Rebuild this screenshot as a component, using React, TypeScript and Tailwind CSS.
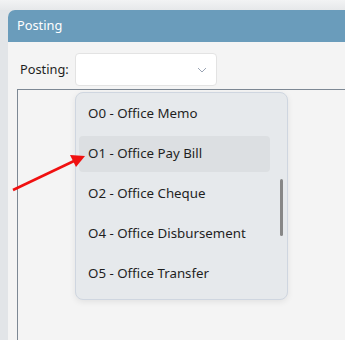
import React from "react";

const items = [
  "O0 - Office Memo",
  "O1 - Office Pay Bill",
  "O2 - Office Cheque",
  "O4 - Office Disbursement",
  "O5 - Office Transfer",
];

const App = () => {
  return (
    <div
      className="relative w-[345px] h-[340px] overflow-hidden bg-[#e2e5e8] pt-[10px] pl-[8px]"
      style={{ fontFamily: '"Segoe UI", "Noto Sans", sans-serif' }}
    >
      {/* top strip */}
      <div className="absolute left-0 top-0 w-full h-[10px] bg-gradient-to-b from-[#f2f3f4] to-[#e6e8ea]" />
      {/* PANEL */}
      <div className="relative flex flex-col h-[330px] rounded-tl-[7px] overflow-hidden bg-[#f4f4f4]">
        <div className="h-[32px] bg-[#6a9cbb] flex items-center pl-[9px] text-[12.8px] text-white">
          Posting
        </div>
        <div className="flex items-center gap-[6px] pl-[12px] pt-[11px]">
          <span className="w-[49px] shrink-0 text-[12.8px] text-[#1e1e1e]">Posting:</span>
          <div className="w-[142px] h-[33px] bg-white border border-[#e3e3e3] rounded-[4px] flex items-center justify-end pr-[9px]">
            <svg width="10" height="6" viewBox="0 0 10 6">
              <path d="M1 1 L5 5 L9 1" fill="none" stroke="#9aa4b4" strokeWidth="1" />
            </svg>
          </div>
        </div>
        <div className="mt-[3px] ml-[9px] flex-1 border-l border-t border-[#7d8894]" />
      </div>

      {/* DROPDOWN */}
      <div className="absolute left-[75px] top-[92px] w-[213px] h-[208px] bg-[#e6e9ec] border border-[#cfd6e0] rounded-[8px] shadow-[0_2px_6px_rgba(0,0,0,0.08)] p-[3px] flex flex-col gap-[4px]">
        {items.map((t, i) => (
          <div
            key={t}
            className={`h-[36px] w-[191px] flex items-center pl-[9px] text-[13.3px] text-[#1f1f1f] rounded-[4px] ${
              i === 1 ? "bg-[#dcdfe2]" : ""
            }`}
          >
            {t}
          </div>
        ))}
        <div className="absolute left-[204px] top-[86px] w-[3px] h-[57px] rounded-full bg-[#878787]" />
      </div>

      {/* ARROW */}
      <svg className="absolute left-0 top-0" width="345" height="340">
        <line x1="13" y1="190" x2="74" y2="161" stroke="#f01010" strokeWidth="2.5" />
        <polygon points="85,156 70,155 76,167" fill="#f01010" />
      </svg>
    </div>
  );
};

export default App;
